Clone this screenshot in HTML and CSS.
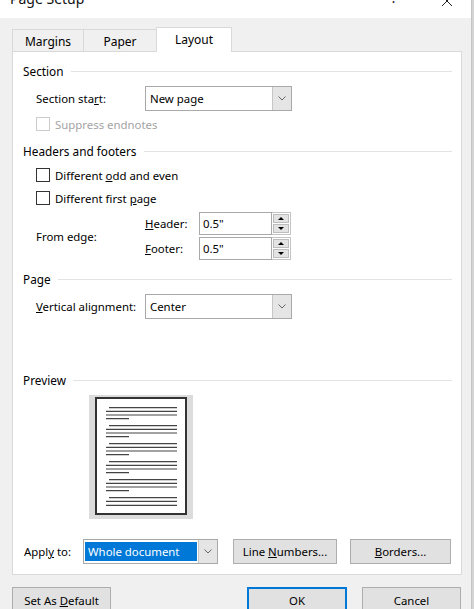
FILE: index.html
```html
<!DOCTYPE html>
<html>
<head>
<meta charset="utf-8">
<link rel="stylesheet" href="styles.css">
</head>
<body>
<div class="dialog">
  <div class="titlebar">
    <span class="title">Page Setup</span>
    <span class="help">?</span>
    <span class="close"><svg width="12" height="12" viewBox="0 0 12 12"><path d="M1 1L11 11M11 1L1 11" stroke="#222" stroke-width="1" fill="none"/></svg></span>
  </div>
  <div class="content">
    <div class="tabs">
      <div class="tab t-margins"><span>Margins</span></div>
      <div class="tab t-paper"><span>Paper</span></div>
      <div class="tab active t-layout"><span>Layout</span></div>
    </div>
    <div class="panel">
      <div class="group-head gh-section"><span>Section</span></div>
      <div class="row r-start">
        <span class="label">Section sta<u>r</u>t:</span>
        <div class="select s-wide"><span class="val"><span>New page</span></span><span class="drop"><svg width="8" height="5" viewBox="0 0 8 5"><path d="M0.5 0.5L4 4L7.5 0.5" stroke="#666" stroke-width="1" fill="none"/></svg></span></div>
      </div>
      <div class="check disabled c-suppress"><span class="box"></span><span>Suppress endnotes</span></div>
      <div class="group-head gh-hf"><span>Headers and footers</span></div>
      <div class="check c-odd"><span class="box"></span><span>Different <u>o</u>dd and even</span></div>
      <div class="check c-first"><span class="box"></span><span>Different first <u>p</u>age</span></div>
      <div class="from-edge">
        <span class="label">From edge:</span>
        <div class="spins">
          <div class="spin-row">
            <span class="spin-label"><span><u>H</u>eader:</span></span>
            <div class="spin-input"><span>0.5"</span></div>
            <div class="spin-btns"><span class="sbtn"><span class="tri-up"></span></span><span class="sbtn"><span class="tri-down"></span></span></div>
          </div>
          <div class="spin-row">
            <span class="spin-label"><span><u>F</u>ooter:</span></span>
            <div class="spin-input"><span>0.5"</span></div>
            <div class="spin-btns"><span class="sbtn"><span class="tri-up"></span></span><span class="sbtn"><span class="tri-down"></span></span></div>
          </div>
        </div>
      </div>
      <div class="group-head gh-page"><span>Page</span></div>
      <div class="row r-valign">
        <span class="label"><u>V</u>ertical alignment:</span>
        <div class="select s-wide"><span class="val"><span>Center</span></span><span class="drop"><svg width="8" height="5" viewBox="0 0 8 5"><path d="M0.5 0.5L4 4L7.5 0.5" stroke="#666" stroke-width="1" fill="none"/></svg></span></div>
      </div>
      <div class="group-head gh-preview"><span>Preview</span></div>
      <div class="preview-frame">
        <div class="page">
          <svg width="88" height="114" viewBox="0 0 88 114">
            <path d="M12 8.7H80M9 12.3H80M9 16H80M9 19.7H32
                     M12 26.7H80M9 30.3H80M9 34H80M9 37.7H32
                     M12 44.7H80M9 48.3H80M9 52H80M9 55.7H32
                     M12 62.7H80M9 66.3H80M9 70H80M9 73.7H32
                     M12 80.7H80M9 84.3H80M9 88H80M9 91.7H32
                     M12 98.7H80M9 102.3H80M9 106.3H80" stroke="#444" stroke-width="1.2" fill="none"/>
          </svg>
        </div>
      </div>
      <div class="apply-row">
        <span class="apply-label">Appl<u>y</u> to:</span>
        <div class="select s-apply"><span class="hl"><span>Whole document</span></span><span class="drop"><svg width="8" height="5" viewBox="0 0 8 5"><path d="M0.5 0.5L4 4L7.5 0.5" stroke="#666" stroke-width="1" fill="none"/></svg></span></div>
        <div class="btn b-line"><span>Line <u>N</u>umbers...</span></div>
        <div class="btn b-borders"><span><u>B</u>orders...</span></div>
      </div>
    </div>
    <div class="footer">
      <div class="btn b-default"><span>Set As <u>D</u>efault</span></div>
      <div class="btn b-ok"><span>OK</span></div>
      <div class="btn b-cancel"><span>Cancel</span></div>
    </div>
  </div>
</div>
</body>
</html>
```

FILE: styles.css
```css
html, body {
  margin: 0;
  padding: 0;
}
body {
  width: 474px;
  height: 609px;
  overflow: hidden;
  background: #d4d4d4;
  font-family: "Noto Sans", "Open Sans", sans-serif;
  font-size: 11.4px;
  color: #000;
}
u {
  text-underline-offset: 1px;
}
.dialog {
  width: 472px;
  height: 609px;
  background: #f0f0f0;
  border-right: 1px solid #c4c4c4;
  box-sizing: border-box;
}
.titlebar {
  height: 18px;
  background: #fff;
  display: flex;
  align-items: flex-start;
  overflow: hidden;
}
.title {
  font-size: 14px;
  line-height: 18px;
  margin-top: -10px;
  padding-left: 10px;
  color: #111;
}
.help {
  margin-left: auto;
  font-size: 14px;
  line-height: 18px;
  margin-top: -11px;
  color: #222;
}
.close {
  margin-left: 44px;
  margin-right: 18px;
  margin-top: -5px;
  display: flex;
}
.content {
  padding: 0 9px 0 12px;
}
.tabs {
  display: flex;
  align-items: flex-end;
  height: 24px;
  margin-top: 9px;
}
.tab {
  box-sizing: border-box;
  height: 22px;
  border: 1px solid #d9d9d9;
  border-bottom: none;
  display: flex;
  align-items: center;
  justify-content: center;
  background: #f0f0f0;
  color: #000;
  font-size: 12px;
  padding-top: 1px;
}
.t-margins { width: 72px; }
.t-paper { width: 74px; margin-left: -1px; }
.t-layout { width: 76px; margin-left: -1px; }
.tab.active {
  height: 25px;
  margin-bottom: -1px;
  background: #fff;
  position: relative;
  z-index: 1;
  padding-bottom: 3px;
}
.panel {
  background: #fff;
  border: 1px solid #d9d9d9;
  padding: 0 9px 10px 10px;
  height: 524px;
  box-sizing: border-box;
}
.group-head {
  height: 16px;
  display: flex;
  align-items: center;
  white-space: nowrap;
  font-size: 11.8px;
}
.group-head::after {
  content: "";
  flex: 1;
  border-top: 1px solid #e3e3e3;
  margin-left: 7px;
}
.gh-section { margin-top: 11px; }
.gh-hf { margin-top: 12px; }
.gh-page { margin-top: 11px; }
.gh-preview { margin-top: 53px; }
.row {
  display: flex;
  align-items: center;
  height: 25px;
  padding-left: 13px;
  margin-top: 7px;
}
.label {
  width: 109px;
  flex: none;
}
.select {
  box-sizing: border-box;
  height: 25px;
  border: 1px solid #a9a9a9;
  background: #fff;
  display: flex;
  align-items: stretch;
}
.s-wide { width: 147px; }
.select .val {
  flex: 1;
  display: flex;
  align-items: center;
  padding-left: 4px;
}
.select .drop {
  width: 18px;
  flex: none;
  background: #e5e5e5;
  border-left: 1px solid #c6c6c6;
  display: flex;
  align-items: center;
  justify-content: center;
}
.check {
  display: flex;
  align-items: center;
  height: 14px;
  padding-left: 13px;
  margin-top: 9px;
}
.c-suppress { margin-top: 6px; }
.check .box {
  width: 14px;
  height: 14px;
  box-sizing: border-box;
  border: 1px solid #333;
  background: #fff;
  margin-right: 5px;
  flex: none;
}
.check.disabled { color: #a3a3a3; }
.check.disabled .box { border-color: #cccccc; }
.from-edge {
  display: flex;
  align-items: center;
  padding-left: 13px;
  margin-top: 7px;
}
.spins {
  display: flex;
  flex-direction: column;
  gap: 2px;
}
.spin-row {
  display: flex;
  align-items: stretch;
  height: 23px;
}
.spin-label {
  width: 54px;
  display: flex;
  align-items: center;
}
.spin-input {
  box-sizing: border-box;
  width: 73px;
  border: 1px solid #a9a9a9;
  display: flex;
  align-items: center;
  padding-left: 3px;
}
.spin-btns {
  width: 19px;
  display: flex;
  flex-direction: column;
  gap: 1px;
  box-sizing: border-box;
  border: 1px solid #c3c3c3;
  border-left: none;
  padding: 1px;
}
.sbtn {
  flex: 1;
  background: #e3e3e3;
  border: 1px solid #bdbdbd;
  display: flex;
  align-items: center;
  justify-content: center;
}
.tri-up {
  width: 0;
  height: 0;
  border-left: 3px solid transparent;
  border-right: 3px solid transparent;
  border-bottom: 3px solid #000;
}
.tri-down {
  width: 0;
  height: 0;
  border-left: 3px solid transparent;
  border-right: 3px solid transparent;
  border-top: 3px solid #000;
}
.preview-frame {
  margin-top: 7px;
  margin-left: 66px;
  width: 104px;
  height: 124px;
  box-sizing: border-box;
  background: #dcdcdc;
  padding: 2px 6px 4px 6px;
}
.page {
  box-sizing: border-box;
  width: 92px;
  height: 118px;
  border: 2px solid #333;
  background: #fff;
}
.page svg { display: block; }
.apply-row {
  display: flex;
  align-items: center;
  height: 25px;
  margin-top: 20px;
  padding-left: 1px;
}
.apply-label {
  width: 59px;
  flex: none;
}
.s-apply {
  width: 135px;
  padding: 2px 0 2px 1px;
}
.s-apply .hl {
  flex: 1;
  background: #0078d7;
  color: #fff;
  display: flex;
  align-items: center;
  padding-left: 3px;
  margin-right: 1px;
}
.s-apply .drop {
  margin: -2px 0;
}
.btn {
  box-sizing: border-box;
  height: 25px;
  background: #e1e1e1;
  border: 1px solid #adadad;
  display: flex;
  align-items: center;
  justify-content: center;
  flex: none;
}
.b-line { width: 104px; margin-left: 15px; }
.b-borders { width: 101px; margin-left: 13px; }
.footer {
  display: flex;
  margin-top: 12px;
  padding-right: 1px;
}
.b-default { width: 99px; height: 26px; }
.b-ok {
  width: 100px;
  height: 26px;
  margin-left: auto;
  border: 2px solid #0078d7;
}
.b-cancel { width: 99px; height: 26px; margin-left: 15px; }
```
